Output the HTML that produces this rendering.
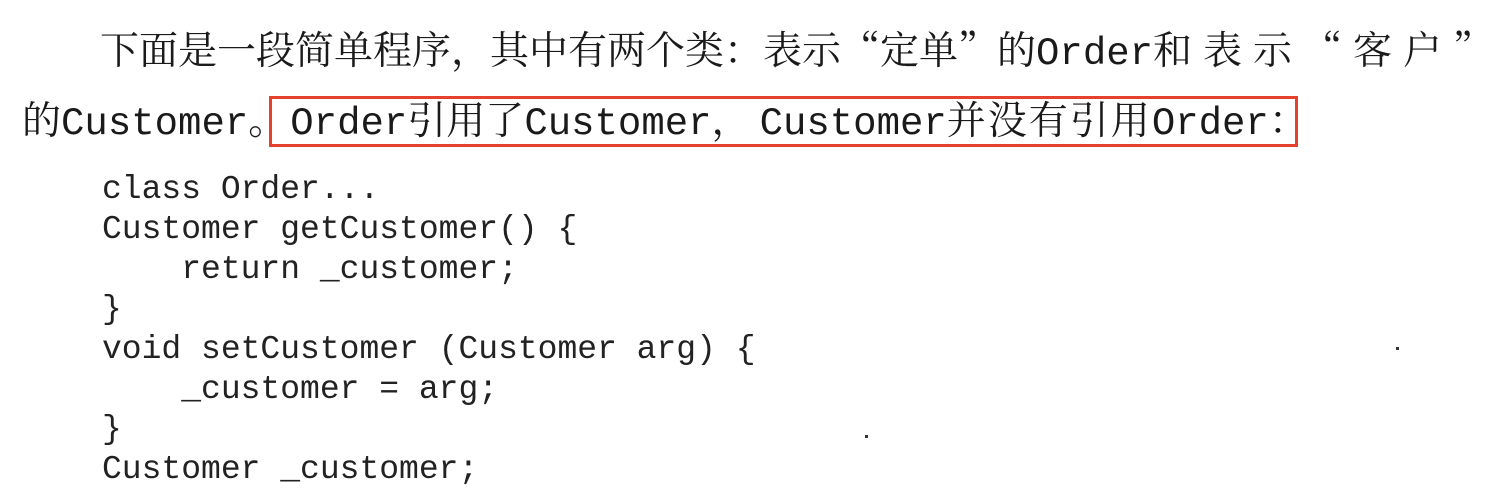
<!DOCTYPE html>
<html><head><meta charset="utf-8"><style>
html,body{margin:0;padding:0;background:#fff;width:1502px;height:500px;overflow:hidden;position:relative}
.t{position:absolute;white-space:nowrap;font-family:"Noto Serif CJK SC","WenQuanYi Zen Hei",serif;font-size:39px;line-height:40px;color:#1a1a1a}
.m{font-family:"Liberation Mono",monospace;font-size:39px;letter-spacing:0}
.code{position:absolute;left:102px;top:170px;font-family:"Liberation Mono",monospace;font-size:33px;line-height:40px;color:#222;white-space:pre;margin:0}
.box{position:absolute;left:269px;top:96px;width:1023px;height:45px;border:3px solid #e5412d}
.dot{position:absolute;width:3px;height:3px;background:#333}
</style></head><body>
<div class="t" style="left:100px;top:28px">下面是一段简单程序，其中有两个类：表示“定单”的<span class="m">Order</span><span style="letter-spacing:11px">和表示“客户”</span></div>
<div class="t" style="left:22px;top:98px">的<span class="m">Customer</span>。<span style="display:inline-block;width:3px"></span><span class="m">Order</span>引用了<span class="m">Customer</span><span style="letter-spacing:9px">，</span><span class="m">Customer</span><span style="letter-spacing:2px">并没有引用</span><span class="m">Order</span>：</div>
<div class="box"></div>
<pre class="code">class Order...
Customer getCustomer() {
    return _customer;
}
void setCustomer (Customer arg) {
    _customer = arg;
}
Customer _customer;</pre>
<div class="dot" style="left:1396px;top:347px"></div>
<div class="dot" style="left:865px;top:435px"></div>
</body></html>
